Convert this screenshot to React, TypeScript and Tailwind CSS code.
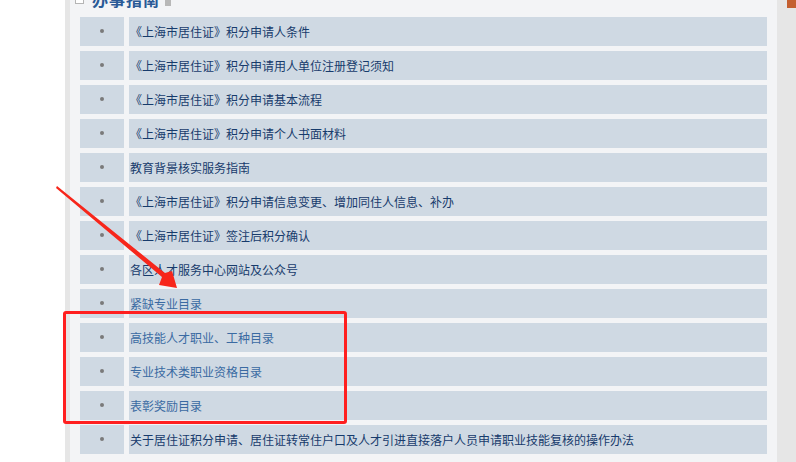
const items = [
  { text: "《上海市居住证》积分申请人条件", visited: false },
  { text: "《上海市居住证》积分申请用人单位注册登记须知", visited: false },
  { text: "《上海市居住证》积分申请基本流程", visited: false },
  { text: "《上海市居住证》积分申请个人书面材料", visited: false },
  { text: "教育背景核实服务指南", visited: false },
  { text: "《上海市居住证》积分申请信息变更、增加同住人信息、补办", visited: false },
  { text: "《上海市居住证》签注后积分确认", visited: false },
  { text: "各区人才服务中心网站及公众号", visited: false },
  { text: "紧缺专业目录", visited: true },
  { text: "高技能人才职业、工种目录", visited: true },
  { text: "专业技术类职业资格目录", visited: true },
  { text: "表彰奖励目录", visited: true },
  { text: "关于居住证积分申请、居住证转常住户口及人才引进直接落户人员申请职业技能复核的操作办法", visited: false },
];

const App = () => {
  return (
    <div
      className="relative w-[796px] h-[462px] overflow-hidden flex bg-white"
      style={{ fontFamily: '"Noto Sans CJK SC", "Noto Sans", sans-serif' }}
    >
      <div className="w-[65px] shrink-0 bg-white" />
      <div className="w-[5px] shrink-0 bg-[#e6e6e6]" />

      <div className="flex-1 bg-[#f3f4f6] flex flex-col">
        <div className="h-[17px] overflow-hidden">
          <div className="h-[20px] -mt-[11px] flex items-center pl-[5px]">
            <div className="w-[9px] h-[9px] border border-[#b5b5b5] bg-white flex items-center justify-center">
              <div className="w-[5px] h-px bg-[#9a9a9a]" />
            </div>
            <span className="ml-[8px] text-[16px] font-bold leading-none tracking-[1px] text-[#2a5a96]">
              办事指南
            </span>
            <div className="ml-[5px] w-[6px] h-[14px] bg-[#b8b8b8]" />
          </div>
        </div>

        <ul className="flex flex-col gap-[5px] px-[10px]">
          {items.map((item, index) => (
            <li key={index} className="flex gap-[5px] h-[29px]">
              <div className="w-[44px] bg-[#cfd9e3] flex items-center justify-center">
                <span className="w-[4px] h-[4px] rounded-full bg-[#7a7a7a] -mt-[1px]" />
              </div>
              <div
                className={`flex-1 bg-[#cfd9e3] flex items-center pl-[1px] text-[12px] leading-none ${
                  item.visited ? "text-[#3a6aa2]" : "text-[#173b6c]"
                }`}
              >
                {item.text}
              </div>
            </li>
          ))}
        </ul>
      </div>

      <div className="w-[19px] shrink-0 bg-[#e6e6e6] flex justify-end items-start">
        <div className="w-[9px] h-[8px] bg-[#c45f30]" />
      </div>

      {/* annotation: arrow */}
      <svg
        className="absolute left-0 top-0 pointer-events-none"
        width="796"
        height="462"
        viewBox="0 0 796 462"
      >
        <polygon
          points="57,186 165,273 172,271 177,288 159,285 162,277 56,188"
          fill="#f7261b"
        />
      </svg>

      {/* annotation: box */}
      <div className="absolute left-[63px] top-[311px] w-[284px] h-[113px] border-[3px] border-[#ff1f1f] rounded-[3px] pointer-events-none" />
    </div>
  );
};

export default App;
